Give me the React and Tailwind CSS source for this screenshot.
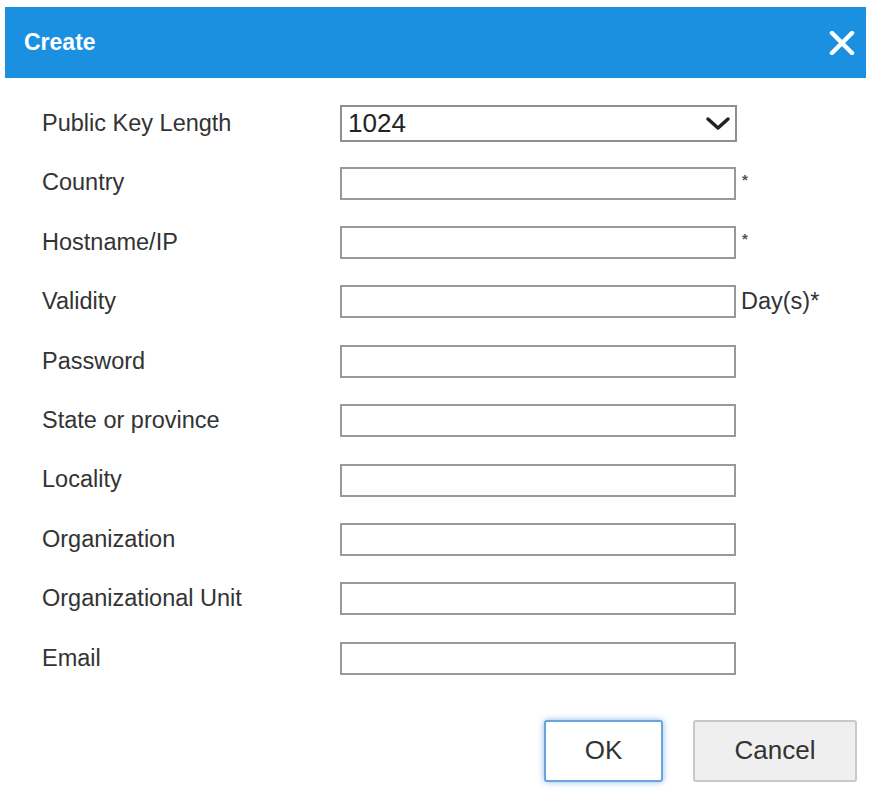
const fields = [
  { label: 'Country', suffix: '*' },
  { label: 'Hostname/IP', suffix: '*' },
  { label: 'Validity', suffix: 'Day(s)*' },
  { label: 'Password' },
  { label: 'State or province' },
  { label: 'Locality' },
  { label: 'Organization' },
  { label: 'Organizational Unit' },
  { label: 'Email' },
];

function Row({ label, children }) {
  return (
    <div className="flex h-[59.4px] items-center">
      <div className="w-[298px] shrink-0 text-[23.5px] text-[#333]">{label}</div>
      {children}
    </div>
  );
}

export default function App() {
  return (
    <div className="h-[790px] w-[871px] bg-white pt-[7px] font-['Liberation_Sans',Arial,sans-serif]">
      <div className="mx-[5px] flex h-[71px] items-center justify-between bg-[#1c90e0] pl-[19px] pr-[11px]">
        <span className="text-[23px] font-bold text-white">Create</span>
        <svg width="26" height="24" viewBox="0 0 26 24" className="mt-[1px]">
          <path d="M3 2 L23 22 M23 2 L3 22" stroke="white" strokeWidth="4.5" strokeLinecap="round" />
        </svg>
      </div>

      <div className="pl-[42px] pt-[16px]">
        <Row label="Public Key Length">
          <div className="flex h-[37px] w-[397px] items-center justify-between border-2 border-[#8f8f8f] pl-[6px] pr-[4px]">
            <span className="text-[26px] text-[#222]">1024</span>
            <svg width="26" height="16" viewBox="0 0 26 16">
              <path d="M3 3 L13 12 L23 3" fill="none" stroke="#222" strokeWidth="3.5" strokeLinecap="round" strokeLinejoin="round" />
            </svg>
          </div>
        </Row>
        {fields.map((f) => (
          <Row key={f.label} label={f.label}>
            <div className="h-[33px] w-[396px] border-2 border-[#999]" />
            {f.suffix === '*' && (
              <span className="ml-[6px] -mt-[6px] text-[15px] font-bold text-[#555]">*</span>
            )}
            {f.suffix && f.suffix !== '*' && (
              <span className="ml-[5px] text-[23.5px] text-[#333]">{f.suffix}</span>
            )}
          </Row>
        ))}
      </div>

      <div className="mt-[32px] flex justify-end gap-[30px] pr-[14px]">
        <button className="h-[62px] w-[119px] rounded-[3px] border-2 border-[#6aa4dc] bg-white text-[26px] text-[#333] shadow-[0_0_6px_rgba(60,140,220,0.6)]">
          OK
        </button>
        <button className="h-[62px] w-[164px] rounded-[3px] border-2 border-[#c8c8c8] bg-[#efefef] text-[26px] text-[#333]">
          Cancel
        </button>
      </div>
    </div>
  );
}
